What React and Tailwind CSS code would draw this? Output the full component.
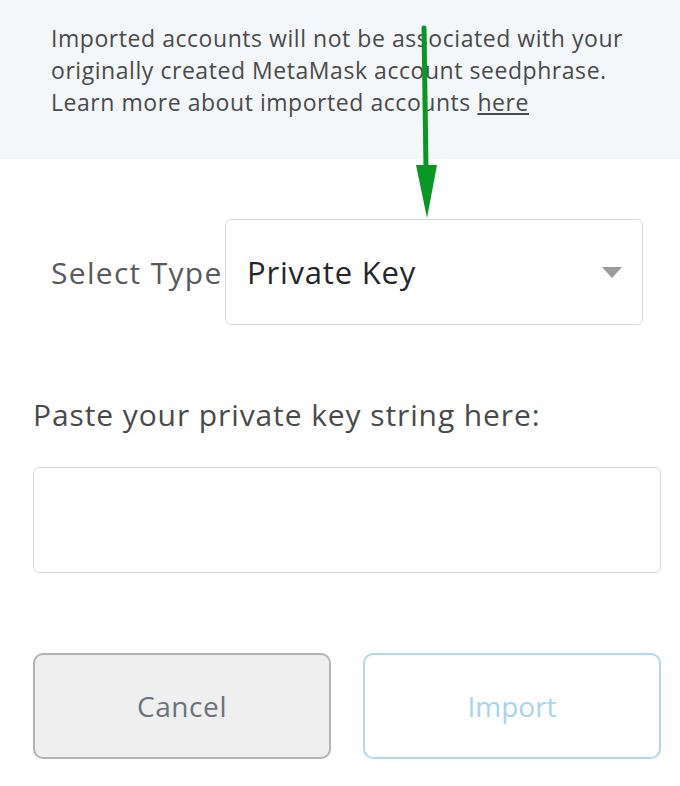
export default function App() {
  return (
    <div
      className="relative w-[680px] h-[786px] bg-white overflow-hidden"
      style={{ fontFamily: '"Open Sans", Lato, sans-serif' }}
    >
      <div className="bg-[#f3f7fa] h-[159px] pl-[51px] pr-2 pt-[22px]">
        <p className="text-[23px] leading-[32px] tracking-[0.55px] text-[#4a4a4a] whitespace-nowrap">
          Imported accounts will not be associated with your
          <br />
          originally created MetaMask account seedphrase.
          <br />
          Learn more about imported accounts <span className="underline">here</span>
        </p>
      </div>

      <div className="flex items-center mt-[60px] pl-[51px]">
        <span className="text-[30px] tracking-[1.3px] text-[#5a5a5a] w-[174px] whitespace-nowrap">Select Type</span>
        <div className="flex items-center justify-between w-[418px] h-[106px] border border-[#d6d9dc] rounded-md pl-[21px] pr-5">
          <span className="text-[31px] tracking-[0.8px] text-[#24272a]">Private Key</span>
          <span className="w-0 h-0 border-l-[10px] border-r-[10px] border-t-[11px] border-l-transparent border-r-transparent border-t-[#9b9b9b]" />
        </div>
      </div>

      <div className="pl-[33px] pr-[19px] pt-[72px]">
        <div className="text-[30px] leading-[36px] tracking-[0.9px] text-[#4a4a4a] whitespace-nowrap">
          Paste your private key string here:
        </div>
        <div className="mt-[34px] h-[106px] border border-[#d6d9dc] rounded-md" />
      </div>

      <div className="grid grid-cols-2 gap-[32px] pl-[33px] pr-[19px] pt-[80px]">
        <button className="h-[106px] bg-[#efefef] border-2 border-[#b4b4b4] rounded-[10px] text-[28px] tracking-[0.6px] text-[#6a737d]">
          Cancel
        </button>
        <button className="h-[106px] bg-white border-2 border-[#b0d8f2] rounded-[10px] text-[28px] text-[#a9d4f1]">
          Import
        </button>
      </div>

      <svg className="absolute left-0 top-0 pointer-events-none" width="680" height="786">
        <line x1="424" y1="28" x2="426" y2="170" stroke="#0a9624" strokeWidth="5" strokeLinecap="round" />
        <polygon points="416,165 437,165 427,218" fill="#0a9624" />
      </svg>
    </div>
  );
}
